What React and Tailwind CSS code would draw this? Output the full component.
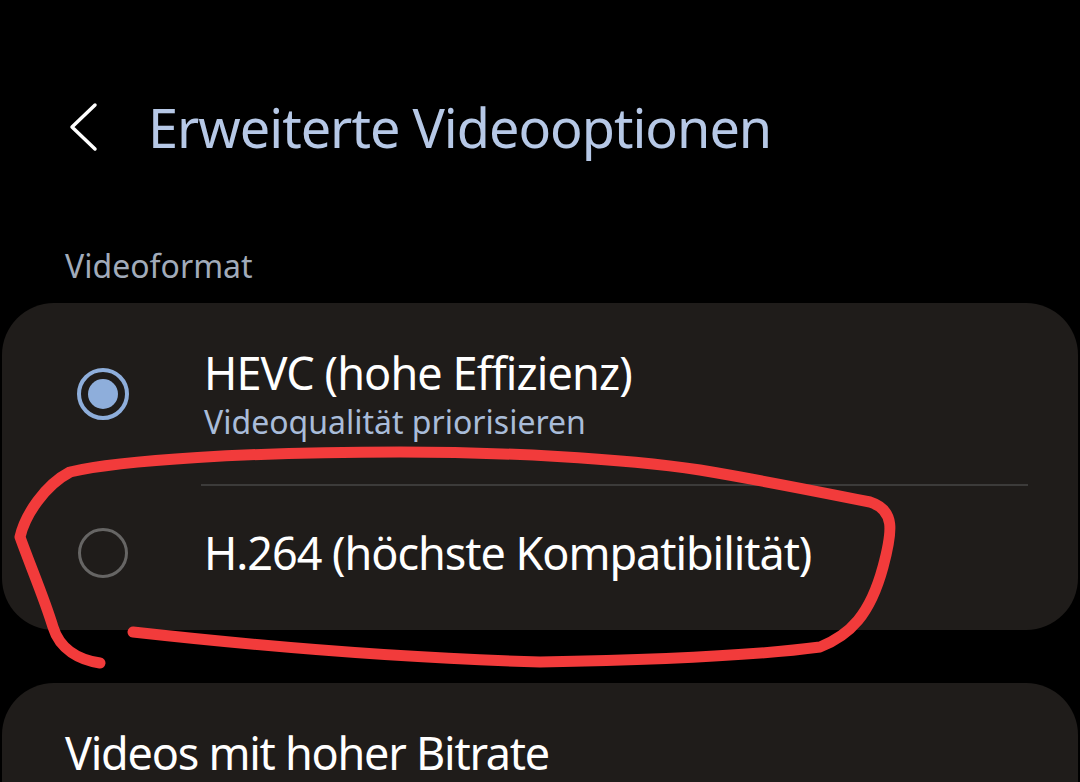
import React from 'react';

const font = { fontFamily: '"Noto Sans", "Open Sans", sans-serif' };

const Radio = ({ checked }) => (
  checked ? (
    <span className="flex h-[52px] w-[52px] items-center justify-center rounded-full border-[4px] border-[#8eaedb]">
      <span className="h-[30px] w-[30px] rounded-full bg-[#8eaedb]" />
    </span>
  ) : (
    <span className="block h-[50px] w-[50px] rounded-full border-[3px] border-[#666564]" />
  )
);

const App = () => {
  return (
    <div className="relative h-[782px] w-[1080px] overflow-hidden bg-black text-white" style={font}>
      {/* Header */}
      <div className="flex h-[200px] items-start pt-[98px]">
        <div className="ml-[66px] flex h-[58px] w-[36px] items-center">
          <svg width="34" height="52" viewBox="0 0 34 52" fill="none">
            <path d="M29 4 L6 26 L29 48" stroke="#ffffff" strokeWidth="3.5" strokeLinecap="round" strokeLinejoin="round" />
          </svg>
        </div>
        <h1 className="ml-[46px] text-[54px] leading-[58px] tracking-[-1px] text-[#b6c8e6]">Erweiterte Videooptionen</h1>
      </div>

      <div className="h-[103px] pl-[65px] pt-[46px]">
        <span className="text-[32px] leading-[40px] text-[#a1abba]">Videoformat</span>
      </div>

      {/* Video format card */}
      <div className="mx-[2px] rounded-[52px] bg-[#1f1c1a]">
        <div className="flex h-[181px] items-center">
          <div className="flex w-[205px] justify-center pr-[3px]">
            <Radio checked />
          </div>
          <div className="-ml-[3px] flex flex-col">
            <span className="text-[45px] leading-[56px] tracking-[-0.9px]">HEVC (hohe Effizienz)</span>
            <span className="text-[32px] leading-[42px] text-[#a9bcd9]">Videoqualität priorisieren</span>
          </div>
        </div>
        <div className="ml-[199px] mr-[50px] h-[2px] bg-[#3c3b3a]" />
        <div className="flex h-[144px] items-center pb-[10px]">
          <div className="flex w-[205px] justify-center pr-[3px]">
            <Radio />
          </div>
          <span className="-ml-[3px] text-[45px] leading-[56px] tracking-[-1.05px]">H.264 (höchste Kompatibilität)</span>
        </div>
      </div>

      {/* High bitrate card */}
      <div className="mx-[2px] mt-[53px] h-[200px] rounded-[52px] bg-[#1f1c1a] pl-[63px] pt-[42px]">
        <span className="text-[45px] leading-[56px] tracking-[-1.25px]">Videos mit hoher Bitrate</span>
      </div>

      {/* Hand-drawn highlight */}
      <svg className="pointer-events-none absolute left-0 top-0" width="1080" height="782" viewBox="0 0 1080 782" fill="none">
        <path
          d="M133 632 C 250 645 400 658 540 662 C 650 660 760 655 820 647 C 850 635 870 615 883 567 C 893 530 895 510 870 502 C 820 492 760 480 700 470 C 620 458 500 452 400 452 C 250 452 120 460 70 472 C 45 485 25 515 20 537 C 30 565 45 600 53 627 C 60 650 80 660 100 663"
          stroke="#f23b3b"
          strokeWidth="11"
          strokeLinecap="round"
          strokeLinejoin="round"
        />
      </svg>
    </div>
  );
};

export default App;
